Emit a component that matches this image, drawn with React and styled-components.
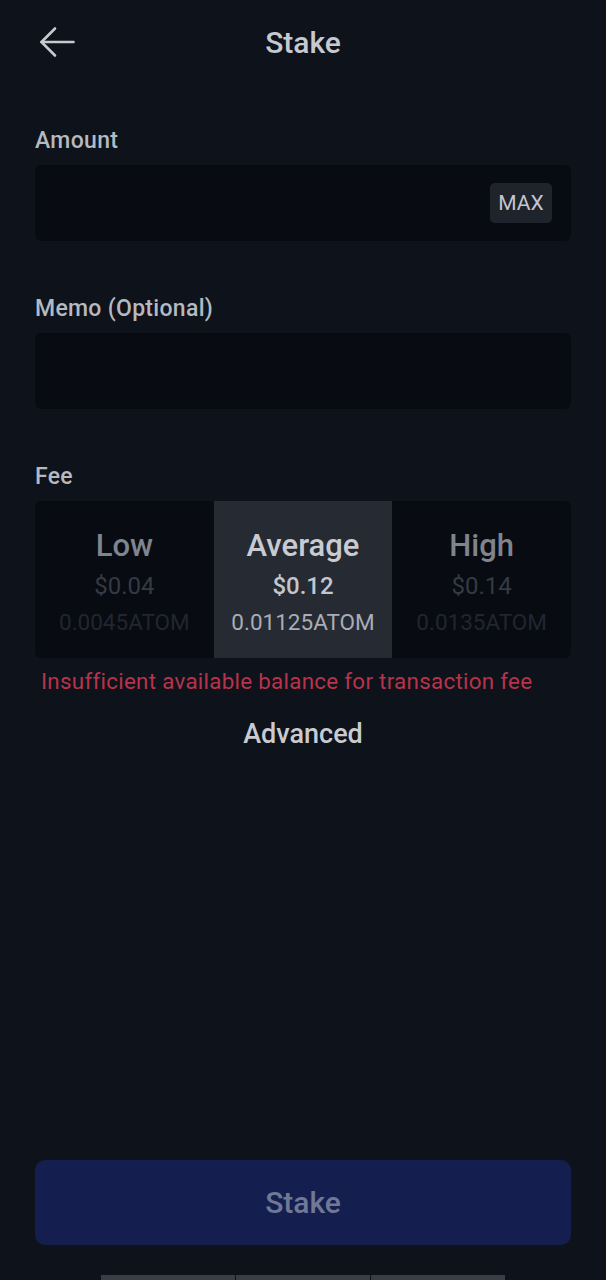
import React from 'react';
import styled, { createGlobalStyle } from 'styled-components';

const GlobalStyle = createGlobalStyle`
  html, body {
    margin: 0;
    padding: 0;
    background: #0e121a;
  }
  body {
    font-family: Roboto, "Noto Sans", "Liberation Sans", sans-serif;
    -webkit-font-smoothing: antialiased;
  }
`;

const fees = [
  { name: 'Low', usd: '$0.04', atom: '0.0045ATOM' },
  { name: 'Average', usd: '$0.12', atom: '0.01125ATOM' },
  { name: 'High', usd: '$0.14', atom: '0.0135ATOM' },
];

function BackArrow() {
  return (
    <svg width="36" height="32" viewBox="0 0 36 32" fill="none">
      <path d="M2.5 16H34.5" stroke="#c6c9cf" strokeWidth="2.6" strokeLinecap="round" />
      <path d="M16 2.5L2.5 16L16 29.5" stroke="#c6c9cf" strokeWidth="2.6" strokeLinecap="round" strokeLinejoin="round" />
    </svg>
  );
}

export default function App() {
  const selected = 1;
  return (
    <>
      <GlobalStyle />
      <Page>
        <Header>
          <BackButton aria-label="Back">
            <BackArrow />
          </BackButton>
          <Title>Stake</Title>
        </Header>

        <Field>
          <Label>Amount</Label>
          <InputBox>
            <MaxButton>MAX</MaxButton>
          </InputBox>
        </Field>

        <Field>
          <Label>Memo (Optional)</Label>
          <InputBox />
        </Field>

        <Field>
          <Label>Fee</Label>
          <FeeBox>
            {fees.map((f, i) => (
              <FeeOption key={f.name} $active={i === selected}>
                <FeeName $active={i === selected}>{f.name}</FeeName>
                <FeeUsd $active={i === selected}>{f.usd}</FeeUsd>
                <FeeAtom $active={i === selected}>{f.atom}</FeeAtom>
              </FeeOption>
            ))}
          </FeeBox>
          <ErrorText>Insufficient available balance for transaction fee</ErrorText>
          <Advanced>Advanced</Advanced>
        </Field>

        <SubmitButton>Stake</SubmitButton>

        <GestureBar>
          <span />
          <span />
          <span />
        </GestureBar>
      </Page>
    </>
  );
}

const Page = styled.div`
  height: 1280px;
  box-sizing: border-box;
  padding: 0 35px;
  display: flex;
  flex-direction: column;
  overflow: hidden;
  background: #0e121a;
`;

const Header = styled.header`
  position: relative;
  height: 85px;
  display: flex;
  align-items: center;
  justify-content: center;
`;

const BackButton = styled.button`
  position: absolute;
  left: 4px;
  top: 26px;
  padding: 0;
  border: none;
  background: none;
  display: flex;
`;

const Title = styled.h1`
  margin: 0;
  font-size: 30px;
  line-height: 36px;
  font-weight: 500;
  color: #c6c9cf;
`;

const Field = styled.section`
  display: flex;
  flex-direction: column;
  margin-top: 44px;
  & + & {
    margin-top: 56px;
  }
`;

const Label = styled.div`
  font-size: 23px;
  line-height: 24px;
  font-weight: 500;
  letter-spacing: 0.3px;
  color: #b5b9c0;
  margin-bottom: 12px;
`;

const InputBox = styled.div`
  height: 76px;
  border-radius: 6px;
  background: #080b12;
  display: flex;
  align-items: center;
  justify-content: flex-end;
  padding: 0 19px;
`;

const MaxButton = styled.button`
  height: 40px;
  width: 62px;
  border: none;
  border-radius: 5px;
  background: #1f232c;
  color: #c3c6cc;
  font-family: Roboto, sans-serif;
  font-size: 21px;
  padding: 0;
`;

const FeeBox = styled.div`
  display: grid;
  grid-template-columns: repeat(3, 1fr);
  height: 157px;
  border-radius: 6px;
  background: #080b12;
  overflow: hidden;
`;

const FeeOption = styled.div`
  display: flex;
  flex-direction: column;
  align-items: center;
  padding-top: 27px;
  white-space: nowrap;
  background: ${p => (p.$active ? '#252a33' : 'transparent')};
`;

const FeeName = styled.div`
  font-size: 31px;
  line-height: 36px;
  font-weight: 500;
  color: ${p => (p.$active ? '#c8cbd1' : '#7f848d')};
`;

const FeeUsd = styled.div`
  font-size: 24px;
  line-height: 30px;
  margin-top: 7px;
  font-weight: ${p => (p.$active ? 500 : 400)};
  color: ${p => (p.$active ? '#c3c6cc' : '#353a43')};
`;

const FeeAtom = styled.div`
  font-size: 22.5px;
  line-height: 28px;
  margin-top: 7px;
  color: ${p => (p.$active ? '#a9adb5' : '#22262f')};
`;

const ErrorText = styled.div`
  margin-top: 11px;
  padding-left: 6px;
  font-size: 22.4px;
  line-height: 24px;
  letter-spacing: 0.27px;
  color: #b8334b;
`;

const Advanced = styled.div`
  margin-top: 26px;
  text-align: center;
  font-size: 27px;
  line-height: 30px;
  font-weight: 500;
  color: #c8cbd1;
`;

const SubmitButton = styled.button`
  margin-top: auto;
  height: 85px;
  border: none;
  border-radius: 10px;
  background: #151f4f;
  color: #6f7996;
  font-family: Roboto, sans-serif;
  font-size: 30px;
  font-weight: 500;
`;

const GestureBar = styled.div`
  margin: 30px 66px 0;
  height: 5px;
  display: grid;
  grid-template-columns: repeat(3, 1fr);
  gap: 1px;
  span {
    background: #3a3d43;
  }
`;
